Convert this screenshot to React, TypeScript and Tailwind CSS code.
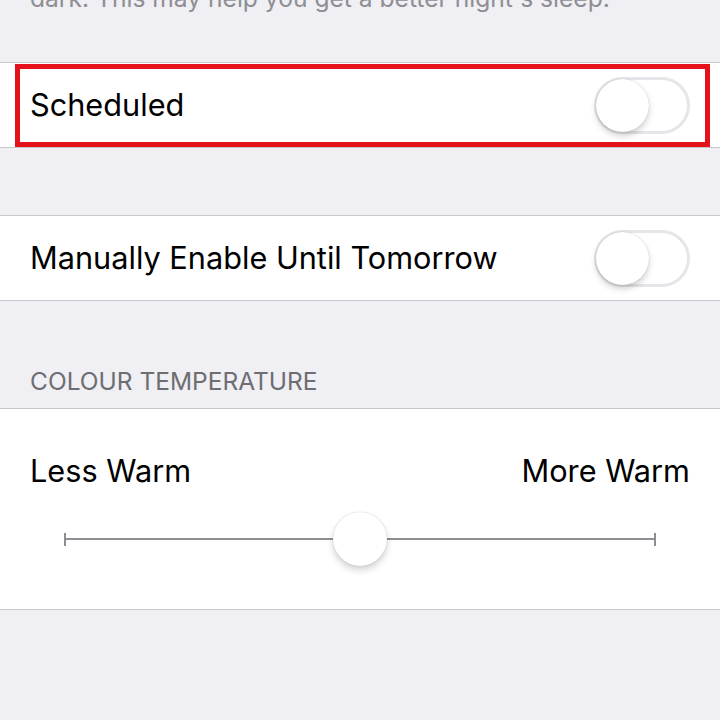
import React from "react";

function Toggle() {
  return (
    <div className="w-[96px] h-[57px] rounded-full border-[3px] border-[#e6e6ea] bg-white relative shrink-0">
      <div className="absolute left-[-1px] top-[-1px] w-[53px] h-[53px] rounded-full bg-white shadow-[0_4px_6px_rgba(0,0,0,0.18),0_0_1px_rgba(0,0,0,0.25)]" />
    </div>
  );
}

export default function App() {
  return (
    <div className="w-[720px] h-[720px] bg-[#efeff4] overflow-hidden font-['Inter',sans-serif]">
      <p className="mt-[-18px] px-[30px] text-[24.6px] leading-[32px] text-[#8e8e93] whitespace-nowrap">
        dark. This may help you get a better night's sleep.
      </p>

      <div className="mt-[48px] relative bg-white border-y border-[#c8c7cc] h-[86px] flex items-center justify-between pl-[30px] pr-[30px]">
        <span className="text-[30.7px] text-black">Scheduled</span>
        <Toggle />
        <div className="absolute left-[15px] right-[10px] top-[1px] bottom-0 border-[5px] border-[#e5121b]" />
      </div>

      <div className="mt-[67px] bg-white border-y border-[#c8c7cc] h-[86px] flex items-center justify-between pl-[30px] pr-[30px]">
        <span className="text-[30.7px] text-black">Manually Enable Until Tomorrow</span>
        <Toggle />
      </div>

      <div className="h-[107px] flex items-end pb-[11px] px-[30px]">
        <span className="text-[24.5px] leading-[32px] text-[#6d6d72]">COLOUR TEMPERATURE</span>
      </div>

      <div className="bg-white border-y border-[#c8c7cc] pt-[44px] pb-[43px]">
        <div className="flex justify-between px-[30px] text-[30.7px] leading-[36px] text-black">
          <span>Less Warm</span>
          <span>More Warm</span>
        </div>
        <div className="mt-[23px] h-[54px] relative mx-[64px] flex items-center">
          <div className="w-[2px] h-[13px] bg-[#8e8e93]" />
          <div className="flex-1 h-[2px] bg-[#8e8e93]" />
          <div className="w-[2px] h-[13px] bg-[#8e8e93]" />
          <div className="absolute left-[269px] top-0 w-[54px] h-[54px] rounded-full bg-white shadow-[0_4px_7px_rgba(0,0,0,0.18),0_0_1px_rgba(0,0,0,0.25)]" />
        </div>
      </div>
    </div>
  );
}
